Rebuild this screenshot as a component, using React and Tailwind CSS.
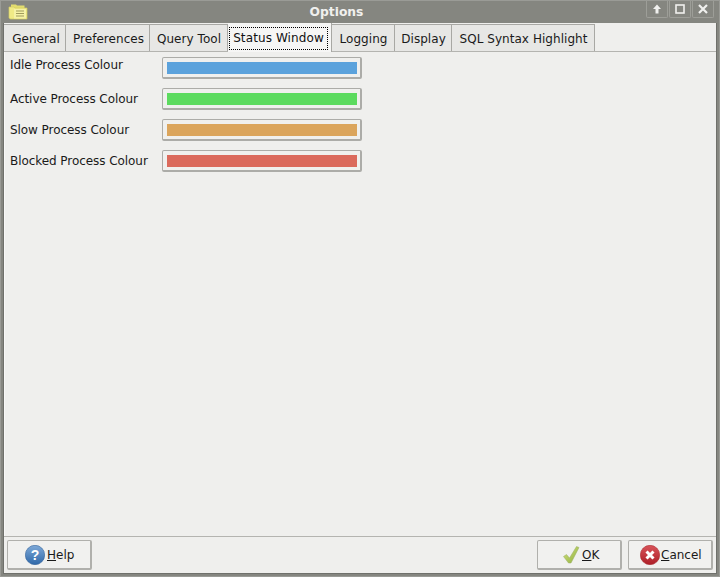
export default function App() {
  const tabs = [
    ["General", "w-[62px] pl-[3px]"],
    ["Preferences", "w-[84px] pl-[2px]"],
    ["Query Tool", "w-[78px] pl-[1px]"],
  ];
  const tabs2 = [
    ["Logging", "w-[63px] pl-[1px]"],
    ["Display", "w-[57px] pl-[1px]"],
    ["SQL Syntax Highlight", "w-[143px] pl-[1px]"],
  ];
  const rows = [
    ["Idle Process Colour", "bg-[#5ba2dc]", "mb-[9px]", "-mt-[6px]"],
    ["Active Process Colour", "bg-[#5cdb5f]", "mb-[9px]", "mt-0"],
    ["Slow Process Colour", "bg-[#dba55c]", "mb-[9px]", "mt-0"],
    ["Blocked Process Colour", "bg-[#db6a5c]", "", "mt-0"],
  ];
  const tab = "mt-[1px] bg-[#e7e7e5] border-t border-r border-[#a8a8a4] flex items-center justify-center pt-[2px] tracking-[0.05px]";
  const btn = "w-[85px] h-[30px] bg-[#f1f1ef] border border-r-2 border-b-2 border-[#b0b0ac] rounded-[2px] flex items-center justify-start";
  return (
    <div className="w-[720px] h-[577px] bg-[#858680] flex flex-col overflow-hidden text-[12px] text-[#1a1a1a] border-t border-x border-b border-[#9a9b96]" style={{ fontFamily: '"DejaVu Sans", sans-serif' }}>
      <div className="h-[22px] flex items-center relative shrink-0">
        <svg className="absolute left-[7px] top-[2px]" width="20" height="17" viewBox="0 0 20 17">
          <path d="M3 3V1.5h5l1 1h7.5V5H3z" fill="#e3dd6e" />
          <path d="M1 4h5l1 1h12v11H2.5L1 15z" fill="#f0ea86" stroke="#d2cb62" strokeWidth="0.7" />
          <rect x="6" y="6" width="12" height="9.5" fill="#f6f2a6" />
          <path d="M8 8h8M8 10.5h8M8 13h8" stroke="#a09b5c" strokeWidth="1" />
        </svg>
        <div className="w-[671px] text-center font-bold text-[#f0f0ee] text-[12.3px]">Options</div>
        <div className="absolute right-[5px] top-[0px] flex gap-px">
          {["up", "max", "close"].map((k) => (
            <div key={k} className="w-[22px] h-[17px] border border-t-0 border-[#9d9e98] rounded-b-[2px] flex items-center justify-center">
              <svg width="12" height="12" viewBox="0 0 12 12">
                {k === "up" && <path d="M6 1.5 10 6H7.5v4.5h-3V6H2z" fill="#f0f0ee" />}
                {k === "max" && <rect x="2" y="2" width="8" height="8" fill="none" stroke="#f0f0ee" strokeWidth="1.6" />}
                {k === "close" && <path d="M2 2l8 8M10 2l-8 8" stroke="#f0f0ee" strokeWidth="2.2" />}
              </svg>
            </div>
          ))}
        </div>
      </div>
      <div className="flex-1 mx-[2px] mb-[2px] border-x border-b border-[#6f706b] bg-[#efefed] flex flex-col min-h-0">
        <div className="h-[29px] shrink-0 relative">
          <div className="relative h-[29px] flex items-stretch border-b border-[#b4b4b0] w-full">
            {tabs.map(([t, w]) => (
              <div key={t} className={`${w} ${tab}`}>{t}</div>
            ))}
            <div className="w-[104px] -mb-px bg-[#f6f6f5] z-10 flex items-center justify-center border-r border-[#a8a8a4] pt-[1px] pr-[2px]">
              <div className="border border-dotted border-black px-[3px] h-[23px] leading-[20px] text-[#111] tracking-[0.1px]">Status Window</div>
            </div>
            {tabs2.map(([t, w]) => (
              <div key={t} className={`${w} ${tab}`}>{t}</div>
            ))}
          </div>
        </div>
        <div className="flex-1 pl-[5px] pt-[5px] border-l border-l-[#f8f8f7]">
          {rows.map(([label, c, mb, mt]) => (
            <div key={label} className={`flex items-center ${mb}`}>
              <div className={`w-[152px] leading-[16px] tracking-[-0.06px] ${mt}`}>{label}</div>
              <div className="w-[200px] h-[22px] bg-[#f0f0ee] border border-[#acaca8] border-r-2 border-b-2 rounded-[2px] pl-[4px] pr-[3px] pt-[4px] pb-[3px] flex">
                <div className={`flex-1 ${c}`} />
              </div>
            </div>
          ))}
        </div>
        <div className="h-[37px] shrink-0 border-t border-[#b4b4b0] flex justify-between items-center pl-[3px] pr-[3px]">
          <button className={`${btn} pl-[17px] gap-[2px]`}>
            <svg width="20" height="20" viewBox="0 0 20 20">
              <defs><linearGradient id="hg" x1="0" y1="0" x2="0" y2="1"><stop offset="0" stopColor="#7ea9d8" /><stop offset="1" stopColor="#2f68a8" /></linearGradient></defs>
              <circle cx="10" cy="10" r="9.7" fill="url(#hg)" stroke="#2f5f99" strokeWidth="0.6" />
              <text x="10" y="15" textAnchor="middle" fontSize="14" fontWeight="bold" fill="#fff" fontFamily="Liberation Sans, sans-serif">?</text>
            </svg>
            <span><span className="underline">H</span>elp</span>
          </button>
          <div className="flex gap-[6px]">
            <button className={`${btn} pl-[25px] gap-[2px]`}>
              <svg width="17" height="18" viewBox="0 0 17 18">
                <defs><linearGradient id="og" x1="0" y1="0" x2="1" y2="1"><stop offset="0" stopColor="#d3e27c" /><stop offset="1" stopColor="#8fb040" /></linearGradient></defs>
                <path d="M0.5 10.5 3.5 8.5 6.5 12 13.5 0.5 16 1.5 8 17H5.5z" fill="url(#og)" stroke="#98ad62" strokeWidth="0.5" />
              </svg>
              <span><span className="underline">O</span>K</span>
            </button>
            <button className={`${btn} pl-[11px] gap-[1px]`}>
              <svg width="20" height="20" viewBox="0 0 20 20">
                <defs><linearGradient id="cg" x1="0" y1="0" x2="0" y2="1"><stop offset="0" stopColor="#d9545a" /><stop offset="1" stopColor="#ad1f28" /></linearGradient></defs>
                <circle cx="10" cy="10" r="9.7" fill="url(#cg)" stroke="#a8262c" strokeWidth="0.6" />
                <path d="M6.5 6.5l7 7M13.5 6.5l-7 7" stroke="#fff" strokeWidth="3" />
              </svg>
              <span><span className="underline">C</span>ancel</span>
            </button>
          </div>
        </div>
      </div>
    </div>
  );
}
